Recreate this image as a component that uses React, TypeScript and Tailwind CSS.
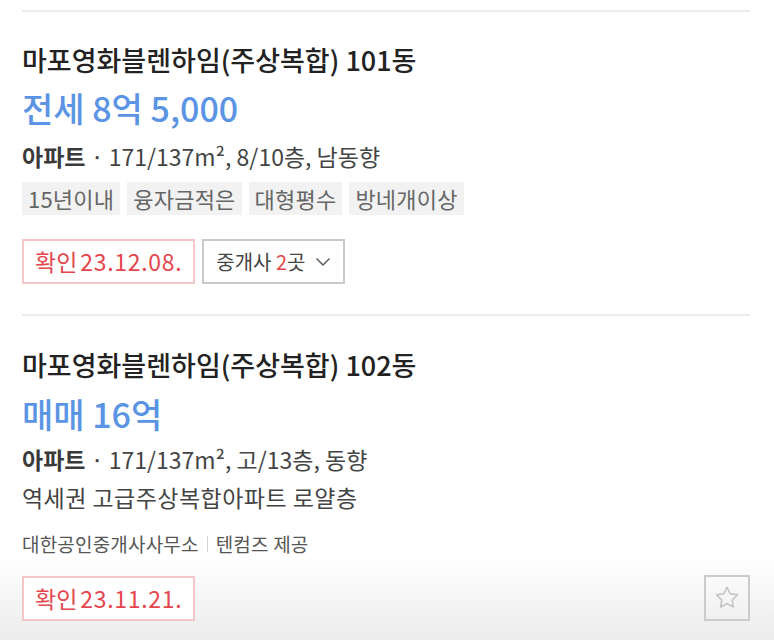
const font = { fontFamily: '"Noto Sans CJK KR", "Noto Sans", sans-serif' };

type Listing = {
  title: string;
  deal: string;
  info: string;
  tags?: string[];
  desc?: string;
  agency?: [string, string];
  confirmed: string;
  brokers?: number;
};

const listings: Listing[] = [
  {
    title: "마포영화블렌하임(주상복합) 101동",
    deal: "전세 8억 5,000",
    info: "171/137m², 8/10층, 남동향",
    tags: ["15년이내", "융자금적은", "대형평수", "방네개이상"],
    confirmed: "23.12.08.",
    brokers: 2,
  },
  {
    title: "마포영화블렌하임(주상복합) 102동",
    deal: "매매 16억",
    info: "171/137m², 고/13층, 동향",
    desc: "역세권 고급주상복합아파트 로얄층",
    agency: ["대한공인중개사사무소", "텐컴즈 제공"],
    confirmed: "23.11.21.",
  },
];

function Chevron() {
  return (
    <svg width="16" height="10" viewBox="0 0 16 10" fill="none" className="ml-[9px]">
      <path d="M1.5 1.5 8 8l6.5-6.5" stroke="#555" strokeWidth="1.4" />
    </svg>
  );
}

function Star() {
  return (
    <svg width="28" height="28" viewBox="0 0 24 24" fill="none">
      <path
        d="M12 2.8l2.75 5.6 6.15.9-4.45 4.35 1.05 6.1L12 16.85l-5.5 2.9 1.05-6.1L3.1 9.3l6.15-.9z"
        stroke="#c2c2c2"
        strokeWidth="1.3"
        strokeLinejoin="round"
      />
    </svg>
  );
}

function Card({ item, last }: { item: Listing; last?: boolean }) {
  return (
    <div className={`border-t-2 border-[#ececec] ${last ? "pt-[33px]" : "pt-[32px] pb-[30px]"}`}>
      <h2 className="text-[27px] leading-[32px] font-medium text-[#222]">{item.title}</h2>
      <p
        className={`${last ? "mt-[15px]" : "mt-[14px]"} text-[34px] leading-[36px] font-medium text-[#5b94e4]`}
      >
        {item.deal}
      </p>
      <p
        className={`${last ? "mt-[14px]" : "mt-[17px]"} text-[23px] leading-[26px] text-[#444]`}
      >
        <span className="font-bold text-[#3a3a3a]">아파트</span> · {item.info}
      </p>
      {item.tags && (
        <div className="mt-[13px] flex gap-[7px]">
          {item.tags.map((t) => (
            <span
              key={t}
              className="bg-[#f2f2f2] px-[6px] h-[33px] flex items-center text-[22px] text-[#666] tracking-[0.01em]"
            >
              {t}
            </span>
          ))}
        </div>
      )}
      {item.desc && (
        <p className="mt-[12px] text-[23px] leading-[26px] text-[#444] tracking-[0.02em]">
          {item.desc}
        </p>
      )}
      {item.agency && (
        <div className="mt-[23px] flex items-center text-[19px] leading-[22px] text-[#555] tracking-[0.01em]">
          <span>{item.agency[0]}</span>
          <span className="mx-[8px] h-[16px] w-px bg-[#d5d5d5]" />
          <span>{item.agency[1]}</span>
        </div>
      )}
      <div className={`flex items-center gap-[7px] ${item.tags ? "mt-[24px]" : "mt-[20px]"}`}>
        <span className="h-[45px] px-[11px] flex items-center border-2 border-[#f5c6c8] bg-white text-[23px] text-[#e5454d]">
          <span>확인</span>
          <span className="ml-[3px] tracking-[0.03em]">{item.confirmed}</span>
        </span>
        {item.brokers && (
          <span className="h-[45px] px-[12px] flex items-center border-2 border-[#c9c9c9] bg-white text-[20px] text-[#444]">
            중개사&nbsp;<span className="text-[#e5454d]">{item.brokers}</span>곳
            <Chevron />
          </span>
        )}
        {last && (
          <span className="ml-auto h-[46px] w-[46px] flex items-center justify-center border-2 border-[#cbcbcb]">
            <Star />
          </span>
        )}
      </div>
    </div>
  );
}

export default function App() {
  return (
    <div
      style={font}
      className="h-[640px] overflow-hidden bg-[linear-gradient(to_bottom,#ffffff_555px,#ececec_640px)] px-[22px] pt-[10px]"
    >
      <div className="mr-[2px]">
        {listings.map((l, i) => (
          <Card key={i} item={l} last={i === listings.length - 1} />
        ))}
      </div>
    </div>
  );
}
